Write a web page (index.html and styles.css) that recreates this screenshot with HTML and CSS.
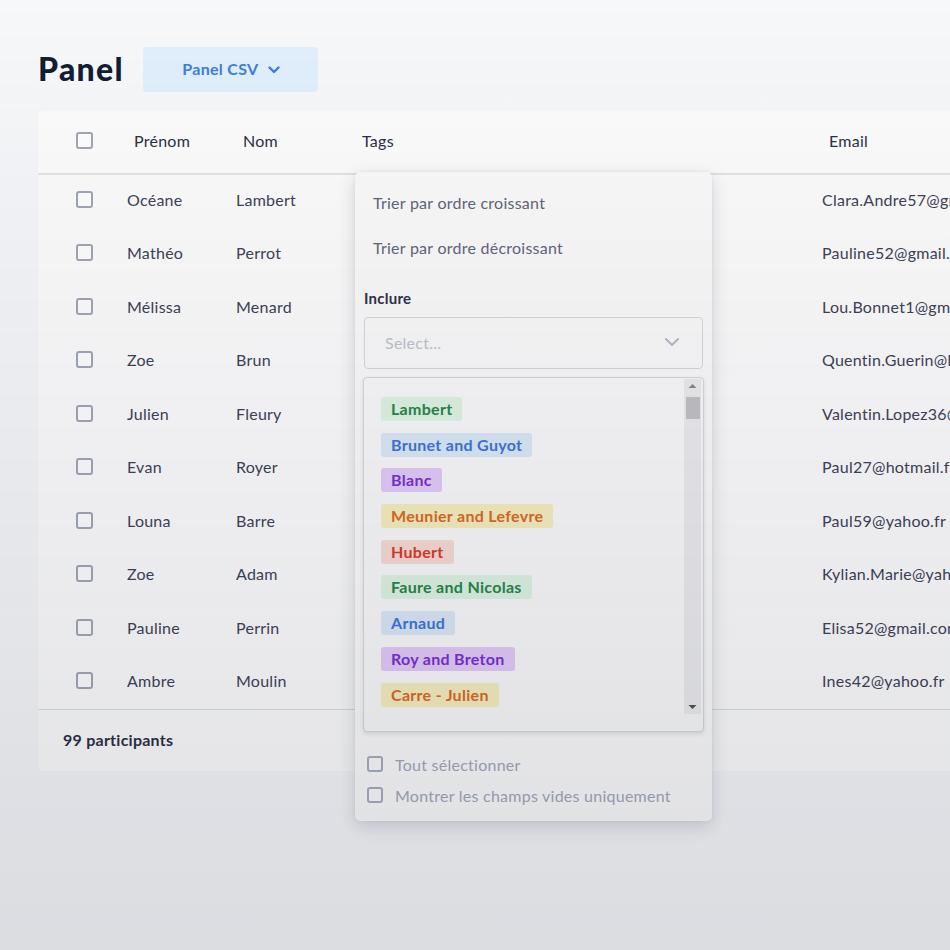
FILE: index.html
```html
<!DOCTYPE html>
<html lang="fr">
<head>
<meta charset="utf-8">
<title>Panel</title>
<link rel="stylesheet" href="styles.css">
</head>
<body>
<div class="page">
  <div class="topbar">
    <h1 class="title">Panel</h1>
    <button class="panel-btn">Panel CSV
      <svg class="chev" width="12" height="8" viewBox="0 0 12 8"><path d="M1.5 1.5 L6 6 L10.5 1.5" fill="none" stroke="#3c7ee0" stroke-width="2.4" stroke-linecap="round" stroke-linejoin="round"/></svg>
    </button>
  </div>

  <div class="card">
    <div class="row head">
      <div class="cell cb-cell"><span class="cb"></span></div>
      <div class="cell">Prénom</div>
      <div class="cell">Nom</div>
      <div class="cell">Tags</div>
      <div class="cell">Email</div>
    </div>
    <div class="row"><div class="cell cb-cell"><span class="cb"></span></div><div class="cell">Océane</div><div class="cell">Lambert</div><div class="cell"></div><div class="cell">Clara.Andre57@gmail.com</div></div>
    <div class="row"><div class="cell cb-cell"><span class="cb"></span></div><div class="cell">Mathéo</div><div class="cell">Perrot</div><div class="cell"></div><div class="cell">Pauline52@gmail.com</div></div>
    <div class="row"><div class="cell cb-cell"><span class="cb"></span></div><div class="cell">Mélissa</div><div class="cell">Menard</div><div class="cell"></div><div class="cell">Lou.Bonnet1@gmail.com</div></div>
    <div class="row"><div class="cell cb-cell"><span class="cb"></span></div><div class="cell">Zoe</div><div class="cell">Brun</div><div class="cell"></div><div class="cell">Quentin.Guerin@hotmail.fr</div></div>
    <div class="row"><div class="cell cb-cell"><span class="cb"></span></div><div class="cell">Julien</div><div class="cell">Fleury</div><div class="cell"></div><div class="cell">Valentin.Lopez36@gmail.com</div></div>
    <div class="row"><div class="cell cb-cell"><span class="cb"></span></div><div class="cell">Evan</div><div class="cell">Royer</div><div class="cell"></div><div class="cell">Paul27@hotmail.fr</div></div>
    <div class="row"><div class="cell cb-cell"><span class="cb"></span></div><div class="cell">Louna</div><div class="cell">Barre</div><div class="cell"></div><div class="cell">Paul59@yahoo.fr</div></div>
    <div class="row"><div class="cell cb-cell"><span class="cb"></span></div><div class="cell">Zoe</div><div class="cell">Adam</div><div class="cell"></div><div class="cell">Kylian.Marie@yahoo.fr</div></div>
    <div class="row"><div class="cell cb-cell"><span class="cb"></span></div><div class="cell">Pauline</div><div class="cell">Perrin</div><div class="cell"></div><div class="cell">Elisa52@gmail.com</div></div>
    <div class="row last"><div class="cell cb-cell"><span class="cb"></span></div><div class="cell">Ambre</div><div class="cell">Moulin</div><div class="cell"></div><div class="cell">Ines42@yahoo.fr</div></div>
    <div class="footer">99 participants</div>

    <div class="popup">
      <div class="sort-item">Trier par ordre croissant</div>
      <div class="sort-item">Trier par ordre décroissant</div>
      <div class="include">
        <div class="label">Inclure</div>
        <div class="select">
          <span class="placeholder">Select...</span>
          <svg width="16" height="10" viewBox="0 0 16 10"><path d="M2 2 L8 8 L14 2" fill="none" stroke="#b7bbc5" stroke-width="2" stroke-linecap="round" stroke-linejoin="round"/></svg>
        </div>
        <div class="listbox">
          <div class="tags">
            <span class="tag green">Lambert</span>
            <span class="tag blue">Brunet and Guyot</span>
            <span class="tag purple">Blanc</span>
            <span class="tag yellow">Meunier and Lefevre</span>
            <span class="tag red">Hubert</span>
            <span class="tag green">Faure and Nicolas</span>
            <span class="tag blue">Arnaud</span>
            <span class="tag purple">Roy and Breton</span>
            <span class="tag yellow">Carre - Julien</span>
          </div>
          <div class="scrollbar">
            <svg class="arrow" width="17" height="14" viewBox="0 0 17 14"><path d="M4.5 9 L8.5 5 L12.5 9 Z" fill="#8a8a8a"/></svg>
            <div class="thumb"></div>
            <div class="spacer"></div>
            <svg class="arrow" width="17" height="14" viewBox="0 0 17 14"><path d="M4.5 5 L8.5 9 L12.5 5 Z" fill="#505050"/></svg>
          </div>
        </div>
        <label class="check-row"><span class="cb small"></span>Tout sélectionner</label>
        <label class="check-row"><span class="cb small"></span>Montrer les champs vides uniquement</label>
      </div>
    </div>
  </div>
</div>
</body>
</html>
```

FILE: styles.css
```css
html, body {
  margin: 0;
  padding: 0;
}
body {
  width: 950px;
  height: 950px;
  overflow: hidden;
  background: #f7f8fa;
  font-family: "Lato", "Open Sans", sans-serif;
  color: #3c4053;
  letter-spacing: 0.25px;
}
body::after {
  content: "";
  position: fixed;
  inset: 0;
  pointer-events: none;
  background: linear-gradient(to bottom, rgba(25, 30, 55, 0) 0%, rgba(25, 30, 55, 0.03) 20%, rgba(25, 30, 55, 0.125) 100%);
  z-index: 50;
}
.page {
  padding: 47px 0 0 38px;
}
.topbar {
  display: flex;
  align-items: center;
  gap: 19px;
  margin-bottom: 19px;
}
.title {
  margin: 0;
  font-size: 32px;
  font-weight: 900;
  color: #141c36;
  letter-spacing: 1.3px;
  line-height: 40px;
  padding-bottom: 1px;
}
.panel-btn {
  width: 175px;
  height: 45px;
  border: none;
  border-radius: 4px;
  background: #e1f0fc;
  color: #3c7ee0;
  font-family: inherit;
  font-size: 16px;
  font-weight: 700;
  letter-spacing: 0.3px;
  display: flex;
  align-items: center;
  justify-content: center;
  gap: 10px;
  padding: 0 0 2px 2px;
}
.chev { margin-top: 2px; }

.card {
  position: relative;
  width: 1150px;
  background: #fdfdfd;
  border-radius: 5px;
}
.row {
  display: grid;
  grid-template-columns: 89px 109px 119px 467px 1fr;
  align-items: center;
  height: 53.5px;
  box-sizing: border-box;
  padding-bottom: 5px;
  font-size: 16px;
  color: #3e4256;
}
.row.head {
  height: 64px;
  padding-bottom: 3px;
  border-bottom: 2px solid #e3e5ea;
  color: #2c3044;
}
.row.head .cell { padding-left: 7px; }
.row.head .cb-cell { padding-left: 38px; }
.row.last { border-bottom: 1.5px solid #dcdde3; }
.cell { white-space: nowrap; }
.cb-cell {
  padding-left: 38px;
  display: flex;
  align-items: center;
}
.cb {
  display: inline-block;
  width: 17px;
  height: 17px;
  box-sizing: border-box;
  border: 2px solid #a2a7b7;
  border-radius: 3px;
  background: #fff;
}
.footer {
  height: 61px;
  box-sizing: border-box;
  padding-bottom: 3px;
  display: flex;
  align-items: center;
  padding-left: 25px;
  font-size: 16px;
  font-weight: 700;
  color: #2b2f42;
}

.popup {
  position: absolute;
  left: 317px;
  top: 61px;
  width: 357px;
  height: 649px;
  box-sizing: border-box;
  padding-top: 8px;
  background: #fbfbfb;
  border-radius: 5px;
  box-shadow: 0 6px 18px rgba(30, 35, 60, 0.16), 0 0 4px rgba(30, 35, 60, 0.06);
  z-index: 10;
}
.sort-item {
  height: 45px;
  display: flex;
  align-items: center;
  padding-left: 18px;
  font-size: 16px;
  color: #626679;
}
.include {
  padding: 0 9px;
}
.label {
  margin-top: 18px;
  height: 20px;
  line-height: 20px;
  font-size: 15px;
  font-weight: 700;
  color: #2d3248;
}
.select {
  margin-top: 9px;
  height: 52px;
  box-sizing: border-box;
  border: 1px solid #d7d9df;
  border-radius: 4px;
  display: flex;
  align-items: center;
  justify-content: space-between;
  padding: 0 22px 2px 20px;
  background: #fbfbfb;
}
.placeholder {
  font-size: 16px;
  color: #c0c4ce;
}
.listbox {
  margin-top: 8px;
  margin-left: -1px;
  width: 341px;
  height: 355px;
  box-sizing: border-box;
  border: 1px solid #d6d8de;
  border-radius: 4px;
  box-shadow: 0 2px 4px rgba(30, 35, 60, 0.12);
  background: #fafafa;
  display: flex;
}
.tags {
  flex: 1;
  display: flex;
  flex-direction: column;
  align-items: flex-start;
  gap: 11.7px;
  padding: 19px 0 0 17px;
  overflow: hidden;
}
.tag {
  height: 24px;
  line-height: 23px;
  padding: 0 10px;
  border-radius: 3px;
  font-size: 16px;
  font-weight: 700;
  letter-spacing: 0.3px;
  white-space: nowrap;
}
.tag.green { background: #dff5e3; color: #268748; }
.tag.blue { background: #dbe9f8; color: #3a76da; }
.tag.purple { background: #e3ccf9; color: #7a2ed6; }
.tag.yellow { background: #f7efbf; color: #dc6a1e; }
.tag.red { background: #f8dbd3; color: #dc3a27; }
.scrollbar {
  width: 17px;
  margin: 1px 2px 17px 0;
  background: #ececee;
  display: flex;
  flex-direction: column;
  align-items: center;
}
.arrow { flex: none; display: block; }
.thumb {
  margin-top: 4px;
  width: 14px;
  height: 22px;
  background: #c2c2c4;
}
.spacer { flex: 1; }
.check-row {
  display: flex;
  align-items: center;
  height: 31px;
  box-sizing: border-box;
  padding-bottom: 3px;
  font-size: 16px;
  color: #a3a8b7;
  gap: 12px;
  padding-left: 3px;
}
.check-row:first-of-type { margin-top: 18px; }
.cb.small {
  width: 16px;
  height: 16px;
  border-color: #a8adbb;
  background: transparent;
}
```
